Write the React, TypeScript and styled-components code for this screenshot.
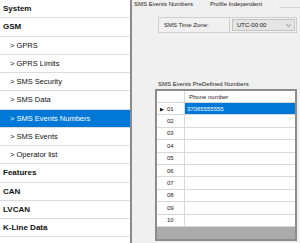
import React from "react"
import styled, { createGlobalStyle } from "styled-components"

const GlobalStyle = createGlobalStyle`
  html, body {
    margin: 0;
    padding: 0;
    overflow: hidden;
  }
  * {
    box-sizing: border-box;
  }
`

const Window = styled.div`
  display: flex;
  width: 300px;
  height: 243px;
  background: #f0f0f0;
  font-family: "Liberation Sans", Arial, sans-serif;
  color: #000;
`

const Sidebar = styled.nav`
  display: flex;
  flex-direction: column;
  width: 132px;
  flex-shrink: 0;
  background: #fff;
  border-right: 2px solid #8a8a8a;
  overflow: hidden;
`

const NavRow = styled.div<{ $bold?: boolean; $active?: boolean }>`
  display: flex;
  align-items: center;
  flex-shrink: 0;
  height: 18.25px;
  padding-left: ${(p) => (p.$bold ? "3px" : "10px")};
  border-bottom: 1px solid #dcdcdc;
  font-size: ${(p) => (p.$bold ? "8px" : "7.5px")};
  font-weight: ${(p) => (p.$bold ? 700 : 400)};
  white-space: nowrap;
  background: ${(p) => (p.$active ? "#0078d7" : "#fff")};
  color: ${(p) => (p.$active ? "#fff" : "#111")};
`

const Main = styled.section`
  display: flex;
  flex-direction: column;
  flex: 1;
  padding-left: 2px;
  font-size: 6px;
`

const TabStrip = styled.div`
  display: flex;
  align-items: center;
  height: 9px;
`

const Tab = styled.span`
  padding-right: 17px;
  line-height: 9px;
  white-space: nowrap;
  color: #222;
`

const TabLine = styled.span`
  flex: 1;
  align-self: flex-start;
  margin-top: 7px;
  border-top: 1px solid #d6d6d6;
`

const Group = styled.div`
  display: flex;
  align-items: center;
  height: 16px;
  margin: 8px 3px 0 24px;
  border: 1px solid #cfcfcf;
`

const GroupLabel = styled.span`
  display: flex;
  align-items: center;
  width: 71px;
  height: 100%;
  padding-left: 5px;
  border-right: 1px solid #cfcfcf;
  color: #222;
`

const Select = styled.div`
  display: flex;
  align-items: center;
  justify-content: space-between;
  flex: 1;
  height: 12px;
  margin: 0 1px 0 2px;
  padding: 0 3px 0 4px;
  background: #e5e5e5;
  border: 1px solid #c4c4c4;
  color: #111;
`

const GridCaption = styled.div`
  margin: 47px 0 0 24px;
  line-height: 9px;
  color: #222;
`

const Grid = styled.div`
  display: flex;
  flex-direction: column;
  height: 152px;
  margin: 0 3px 0 21px;
  border: 2px solid #8c8c8c;
  background: #ababab;
`

const GridRow = styled.div<{ $header?: boolean }>`
  display: flex;
  height: ${(p) => (p.$header ? "12px" : "12.4px")};
  background: #fff;
  border-bottom: 1px solid #d8d8d8;
`

const RowHead = styled.div`
  position: relative;
  display: flex;
  align-items: center;
  width: 28px;
  padding-left: 10px;
  border-right: 1px solid #d8d8d8;
  color: #222;
`

const Pointer = styled.span`
  position: absolute;
  left: 3px;
  top: 50%;
  transform: translateY(-50%);
  font-size: 5px;
  color: #000;
`

const Cell = styled.div<{ $selected?: boolean }>`
  display: flex;
  align-items: center;
  flex: 1;
  padding-left: ${(p) => (p.$selected ? "2px" : "4px")};
  background: ${(p) => (p.$selected ? "#0078d7" : "#fff")};
  color: ${(p) => (p.$selected ? "#fff" : "#222")};
`

const navItems = [
  { label: "System", bold: true },
  { label: "GSM", bold: true },
  { label: "> GPRS" },
  { label: "> GPRS Limits" },
  { label: "> SMS Security" },
  { label: "> SMS Data" },
  { label: "> SMS Events Numbers", active: true },
  { label: "> SMS Events" },
  { label: "> Operator list" },
  { label: "Features", bold: true },
  { label: "CAN", bold: true },
  { label: "LVCAN", bold: true },
  { label: "K-Line Data", bold: true },
  { label: "", bold: true }
]

const numbers = ["37065555555", "", "", "", "", "", "", "", "", ""]

function Chevron() {
  return (
    <svg width="5" height="3" viewBox="0 0 5 3">
      <path d="M0.3 0.3 L2.5 2.5 L4.7 0.3" fill="none" stroke="#666" strokeWidth="0.7" />
    </svg>
  )
}

export default function App() {
  return (
    <>
      <GlobalStyle />
      <Window>
        <Sidebar>
          {navItems.map((item, i) => (
            <NavRow key={i} $bold={item.bold} $active={item.active}>
              {item.label}
            </NavRow>
          ))}
        </Sidebar>
        <Main>
          <TabStrip>
            <Tab>SMS Events Numbers</Tab>
            <Tab>Profile Independent</Tab>
            <TabLine />
          </TabStrip>
          <Group>
            <GroupLabel>SMS Time Zone:</GroupLabel>
            <Select>
              <span>UTC-00:00</span>
              <Chevron />
            </Select>
          </Group>
          <GridCaption>SMS Events PreDefined Numbers</GridCaption>
          <Grid>
            <GridRow $header>
              <RowHead />
              <Cell>Phone number</Cell>
            </GridRow>
            {numbers.map((num, i) => (
              <GridRow key={i}>
                <RowHead>
                  {i === 0 && <Pointer>▶</Pointer>}
                  {String(i + 1).padStart(2, "0")}
                </RowHead>
                <Cell $selected={i === 0}>{num}</Cell>
              </GridRow>
            ))}
          </Grid>
        </Main>
      </Window>
    </>
  )
}
